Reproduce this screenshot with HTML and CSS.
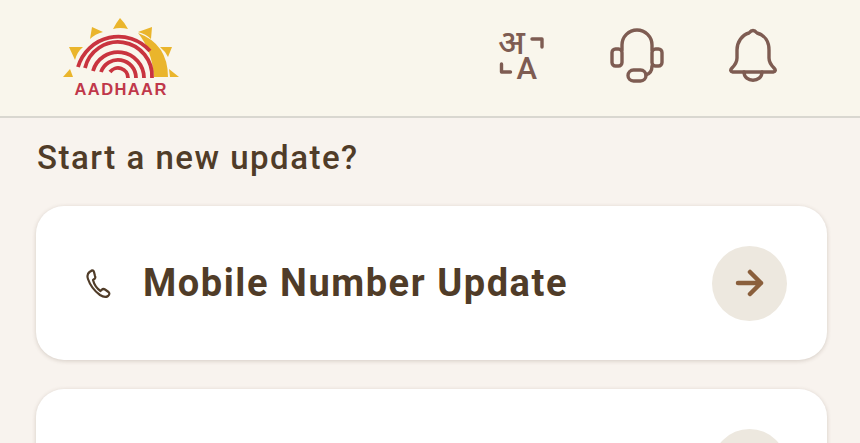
FILE: index.html
```html
<!DOCTYPE html>
<html lang="en">
<head>
    <meta charset="UTF-8">
    <meta name="viewport" content="width=device-width, initial-scale=1.0">
    <title>Aadhaar</title>
    <link rel="stylesheet" href="styles.css">
</head>
<body>
    <header class="top-bar">
        <svg class="logo" viewBox="60 14 120 84" width="120" height="84">
            <g class="sun">
                <path d="M113 29q3-6 7-11 5 5 8 11-8-2-15 0z"/>
                <path d="M92 27l11 5q-8 2-13 7z"/>
                <path d="M152 27l-14 5q8 2 13 7z"/>
                <path d="M69 47h14q-6 5-8 13z"/>
                <path d="M160 47h12l-4 10q-3-6-8-10z"/>
                <path d="M63 77l7-8 3 8z"/>
                <path d="M169 69l10 8h-9z"/>
                <path d="M138 33q30 11 30 44h-14q-2-27-16-44z"/>
            </g>
            <g class="print">
                <path d="M78 67A42 42 0 0 1 150 51"/>
                <path d="M85 68A34 34 0 0 1 152 78"/>
                <path d="M93 71A26 26 0 0 1 144 78"/>
                <path d="M101 72A18 18 0 0 1 136 78"/>
                <path d="M110 72A10 10 0 0 1 128 78"/>
            </g>
            <text x="74.500" y="95" class="logo-text">AADHAAR</text>
        </svg>
        <div class="top-icons">
            <svg class="top-icon" viewBox="488 26 60 60" width="60" height="60">
                <text x="498" y="54" class="lang-hi">अ</text>
                <text x="516.500" y="79" class="lang-en">A</text>
                <path d="M532 39h10v8M501.500 64v8h9"/>
            </svg>
            <svg class="top-icon" viewBox="608 26 60 60" width="60" height="60">
                <path d="M622 50v-5a15 15 0 0 1 30 0v5"/>
                <rect x="612" y="49" width="10" height="17" rx="3.500"/>
                <rect x="652" y="49" width="10" height="17" rx="3.500"/>
                <rect x="628" y="70" width="18" height="11" rx="5.500"/>
                <path d="M652 66q0 7-6 9"/>
            </svg>
            <svg class="top-icon" viewBox="728 26 60 60" width="60" height="60">
                <path d="M749 33q4-5 8 0c8 2 12 9 12 17v8c0 4 2 7 5 10q3 3-1 4h-40q-4-1-1-4c3-3 5-6 5-10v-8c0-8 5-15 12-17z"/>
                <path d="M744 72c0 11 18 11 18 0"/>
            </svg>
        </div>
    </header>

    <div class="container">
        <h2 class="section-title">Start a new update?</h2>
        <div class="update-card">
            <svg class="phone-icon" viewBox="86 266 26 32" width="26" height="32">
                <path d="M92 269.500l-2.500 1.500c-2 1.500-2.500 4-1.500 7 2 6 6.500 12 12 16 3 2 6 2.500 8 1 2-1.500 1.500-3 .5-4l-3.500-2.500c-1.500-1-2.500-.5-3.500.5l-1 1c-3.500-2.500-6.500-7-7.500-11l1.500-1c1-1 1-2 .5-3l-1-4c-.5-1.500-1.500-2-2.500-1.500z"/>
            </svg>
            <span class="card-label">Mobile Number Update</span>
            <span class="arrow-button">
                <svg viewBox="0 0 30 30" width="30" height="30">
                    <path d="M3 15h23M15 4l11 11-11 11"/>
                </svg>
            </span>
        </div>
        <div class="update-card">
            <span class="arrow-button arrow-only">
                <svg viewBox="0 0 30 30" width="30" height="30">
                    <path d="M3 15h23M15 4l11 11-11 11"/>
                </svg>
            </span>
        </div>
    </div>
</body>
</html>
```

FILE: styles.css
```css
html, body {
    height: 100%;
    overflow: hidden;
}
body {
    font-family: Roboto, sans-serif;
    margin: 0;
    padding: 0;
    background-color: #f8f3ee;
    color: #503c28;
}
.top-bar {
    display: flex;
    justify-content: space-between;
    align-items: center;
    box-sizing: border-box;
    height: 118px;
    padding: 0 72px 4px 60px;
    background-color: #f9f6ec;
    border-bottom: 2px solid #d9d7d0;
}
.logo {
    display: block;
}
.sun {
    fill: #eab52c;
}
.print {
    fill: none;
    stroke: #c9343f;
    stroke-width: 3.800;
}
.logo-text {
    font-family: "Liberation Sans", sans-serif;
    font-size: 16.500px;
    font-weight: bold;
    letter-spacing: 1.400px;
    fill: #c0384a;
}
.top-icons {
    display: flex;
    gap: 60px;
}
.top-icon {
    display: block;
    overflow: visible;
    fill: none;
    stroke: #7e5c52;
    stroke-width: 3.400;
    stroke-linecap: round;
    stroke-linejoin: round;
}
.top-icon text {
    stroke: none;
    fill: #7e5c52;
}
.lang-hi {
    font-family: "Noto Sans", "Noto Sans CJK SC", sans-serif;
    font-size: 34px;
    font-weight: 500;
}
.lang-en {
    font-family: Roboto, sans-serif;
    font-size: 31px;
    font-weight: 500;
}
.container {
    padding: 21px 33px 0 36px;
}
.section-title {
    margin: 0 0 30px 1px;
    font-size: 33px;
    line-height: 37px;
    font-weight: 500;
    letter-spacing: 1.500px;
}
.update-card {
    display: flex;
    align-items: center;
    box-sizing: border-box;
    height: 154px;
    margin-bottom: 29px;
    padding: 0 40px 0 50px;
    background-color: #fff;
    border-radius: 28px;
    box-shadow: 0 1px 4px rgba(90, 70, 50, 0.22);
}
.phone-icon {
    display: block;
    margin-right: 31px;
    fill: none;
    stroke: #503c28;
    stroke-width: 2.200;
    stroke-linejoin: round;
}
.card-label {
    flex: 1;
    font-size: 38px;
    font-weight: 700;
    letter-spacing: 1.550px;
}
.arrow-button {
    display: flex;
    align-items: center;
    justify-content: center;
    width: 75px;
    height: 75px;
    border-radius: 50%;
    background-color: #ede8df;
}
.arrow-only {
    margin-left: auto;
}
.arrow-button svg {
    display: block;
    fill: none;
    stroke: #8a5f3c;
    stroke-width: 4.500;
    stroke-linecap: round;
    stroke-linejoin: round;
}
```
